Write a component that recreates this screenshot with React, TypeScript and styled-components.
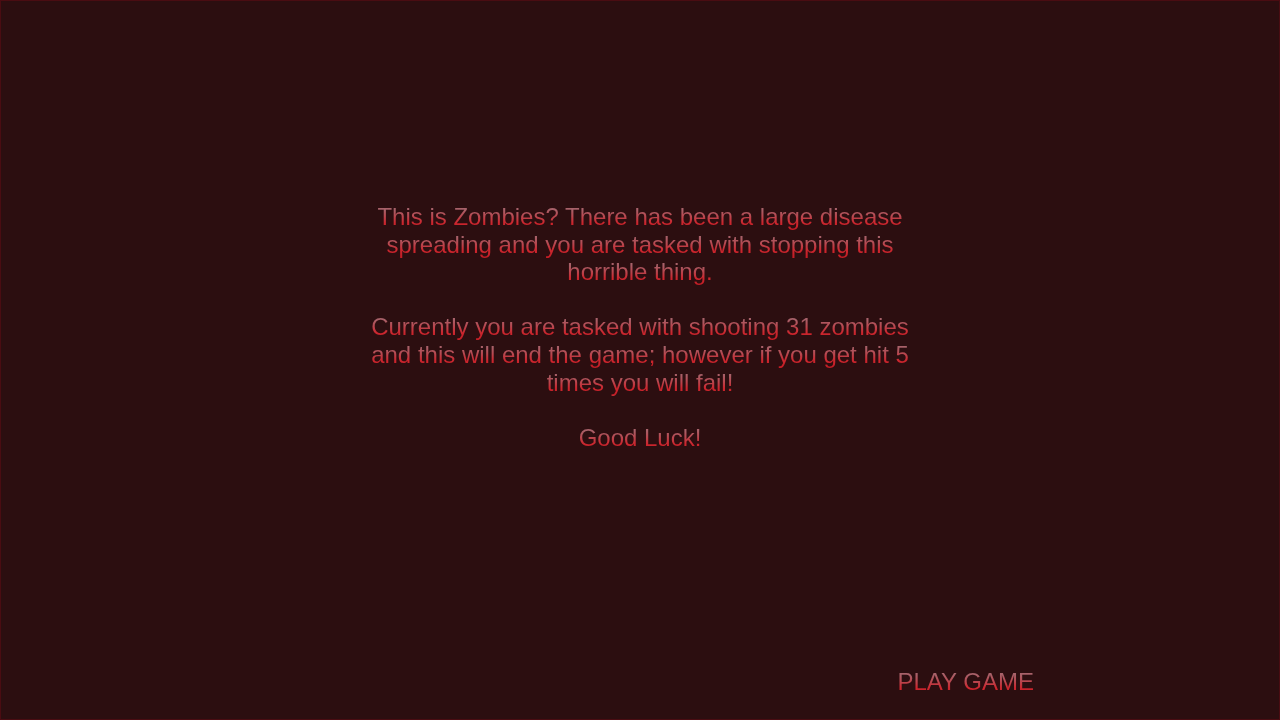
import styled, { createGlobalStyle } from "styled-components";

const GlobalStyle = createGlobalStyle`
  html, body {
    margin: 0;
    padding: 0;
    background: #2c0e10;
  }
`;

const Screen = styled.div`
  box-sizing: border-box;
  width: 100vw;
  height: 100vh;
  background-color: #2c0e10;
  border: 1px solid #4a0c12;
  display: flex;
  flex-direction: column;
  align-items: center;
  font-family: "Liberation Sans", Arial, sans-serif;
`;

// red text, greyish pink at the top of every line
const GlowText = styled.p<{ $lh: number }>`
  margin: 0;
  line-height: ${(p) => p.$lh}px;
  background-image: linear-gradient(
    to bottom,
    #a86870 0%,
    #a86068 25%,
    #b84850 48%,
    #cc262e 72%,
    #c21c24 100%
  );
  background-size: 100% ${(p) => p.$lh}px;
  background-repeat: repeat-y;
  -webkit-background-clip: text;
  background-clip: text;
  color: transparent;
`;

const Intro = styled.div`
  margin-top: 202px;
  width: 542px;
  display: flex;
  flex-direction: column;
  align-items: center;
  gap: 27.6px;
  text-align: center;
  font-size: 24px;
`;

const Footer = styled.div`
  margin-top: auto;
  width: 100%;
  display: flex;
  justify-content: flex-end;
  padding: 0 245px 23px 0;
  box-sizing: border-box;
`;

const PlayButton = styled.button`
  border: none;
  background: none;
  padding: 0;
  cursor: pointer;
  font-family: "Liberation Sans", Arial, sans-serif;
  font-size: 24px;
`;

export default function App() {
  return (
    <Screen>
      <GlobalStyle />
      <Intro>
        <GlowText $lh={27.6}>
          This is Zombies? There has been a large disease spreading and you are
          tasked with stopping this horrible thing.
        </GlowText>
        <GlowText $lh={27.6}>
          Currently you are tasked with shooting 31 zombies and this will end
          the game; however if you get hit 5 times you will fail!
        </GlowText>
        <GlowText $lh={27.6}>Good Luck!</GlowText>
      </Intro>
      <Footer>
        <PlayButton>
          <GlowText $lh={27.6}>PLAY GAME</GlowText>
        </PlayButton>
      </Footer>
    </Screen>
  );
}
